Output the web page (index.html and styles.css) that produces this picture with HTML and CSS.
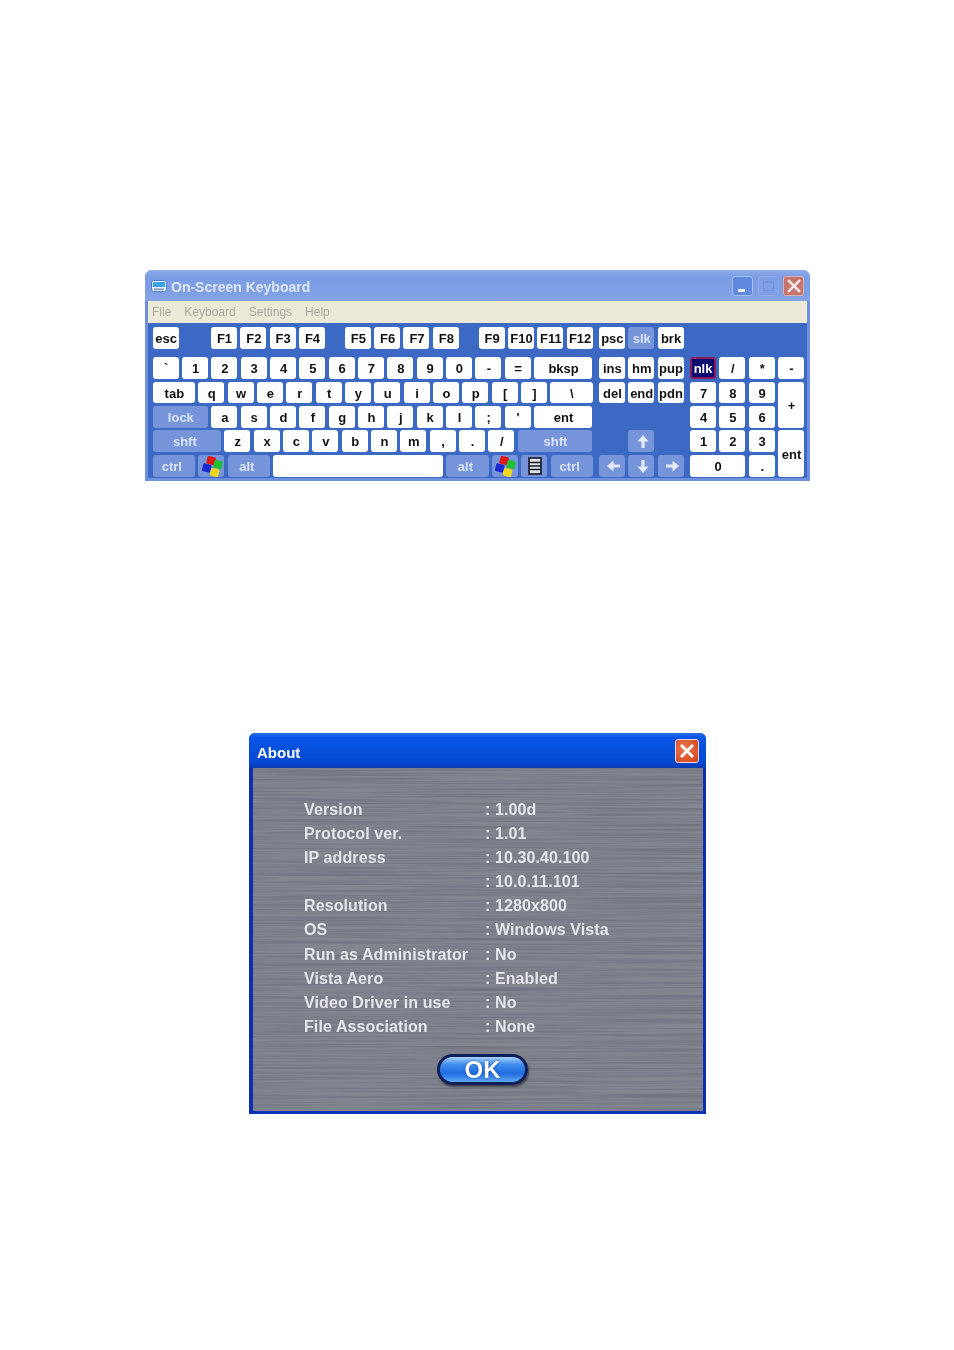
FILE: index.html
```html
<!DOCTYPE html>
<html lang="en">
<head>
<meta charset="utf-8">
<title>On-Screen Keyboard and About dialog</title>
<link rel="stylesheet" href="styles.css">
</head>
<body>
<svg class="defs" width="0" height="0" aria-hidden="true">
  <defs>
    <g id="flag">
      <rect x="7" y="0.5" width="8.5" height="8" rx="1.5" fill="#e01818" transform="rotate(14 11 4)"/>
      <rect x="14" y="4.5" width="8.5" height="8" rx="1.5" fill="#22c030" transform="rotate(14 18 8)"/>
      <rect x="2.5" y="8" width="8.5" height="8" rx="1.5" fill="#1a2ad0" transform="rotate(14 7 12)"/>
      <rect x="10.5" y="12.5" width="8.5" height="8" rx="1.5" fill="#f2d81c" transform="rotate(14 15 16)"/>
    </g>
    <filter id="brushed" x="0" y="0" width="100%" height="100%">
      <feTurbulence type="fractalNoise" baseFrequency="0.006 0.6" numOctaves="3" seed="7"/>
      <feColorMatrix type="matrix" values="0 0 0 0 0.1  0 0 0 0 0.1  0 0 0 0 0.15  0.9 0 0 0 -0.32"/>
    </filter>
  </defs>
</svg>

<section class="osk">
  <header class="osk-title">
    <svg class="osk-icon" width="16" height="12" viewBox="0 0 16 12"><rect x="0.5" y="0.5" width="15" height="11" rx="2" fill="#e8f0fa" stroke="#4a78d0"/><rect x="2" y="2" width="12" height="5" fill="#38a4e8"/><rect x="3" y="8.5" width="10" height="1.5" fill="#7a90c0"/></svg>
    <span class="osk-name">On-Screen Keyboard</span>
    <span class="win-btns">
      <span class="wbtn wbtn-min"><i class="min-bar"></i></span>
      <span class="wbtn wbtn-max"><i class="max-box"></i></span>
      <span class="wbtn wbtn-close"><svg width="16" height="16" viewBox="0 0 16 16"><path d="M3 3l10 10M13 3L3 13" stroke="#f4e8e4" stroke-width="2.6" stroke-linecap="square"/></svg></span>
    </span>
  </header>
  <nav class="osk-menu"><span>File</span><span>Keyboard</span><span>Settings</span><span>Help</span></nav>
  <div class="kb">
    <div class="sect sect-main">
      <div class="row">
        <span class="key">esc</span>
        <span class="key gap-f1">F1</span><span class="key">F2</span><span class="key">F3</span><span class="key">F4</span>
        <span class="key gap-f">F5</span><span class="key">F6</span><span class="key">F7</span><span class="key">F8</span>
        <span class="key gap-f">F9</span><span class="key">F10</span><span class="key">F11</span><span class="key">F12</span>
      </div>
      <div class="row">
        <span class="key">`</span><span class="key">1</span><span class="key">2</span><span class="key">3</span><span class="key">4</span><span class="key">5</span><span class="key">6</span><span class="key">7</span><span class="key">8</span><span class="key">9</span><span class="key">0</span><span class="key">-</span><span class="key">=</span><span class="key w58">bksp</span>
      </div>
      <div class="row">
        <span class="key w42">tab</span><span class="key">q</span><span class="key">w</span><span class="key">e</span><span class="key">r</span><span class="key">t</span><span class="key">y</span><span class="key">u</span><span class="key">i</span><span class="key">o</span><span class="key">p</span><span class="key">[</span><span class="key">]</span><span class="key w42">\</span>
      </div>
      <div class="row">
        <span class="key off w55">lock</span><span class="key">a</span><span class="key">s</span><span class="key">d</span><span class="key">f</span><span class="key">g</span><span class="key">h</span><span class="key">j</span><span class="key">k</span><span class="key">l</span><span class="key">;</span><span class="key">'</span><span class="key w58">ent</span>
      </div>
      <div class="row">
        <span class="key off w68 shift-l">shft</span><span class="key">z</span><span class="key">x</span><span class="key">c</span><span class="key">v</span><span class="key">b</span><span class="key">n</span><span class="key">m</span><span class="key">,</span><span class="key">.</span><span class="key">/</span><span class="key off w75">shft</span>
      </div>
      <div class="row">
        <span class="key off w42 shift-l">ctrl</span>
        <span class="key off"><svg width="24" height="21" viewBox="0 0 24 21"><use href="#flag"/></svg></span>
        <span class="key off w42 shift-l">alt</span>
        <span class="key w170"></span>
        <span class="key off w42 shift-l">alt</span>
        <span class="key off"><svg width="24" height="21" viewBox="0 0 24 21"><use href="#flag"/></svg></span>
        <span class="key off"><svg width="14" height="18" viewBox="0 0 14 18"><rect x="1" y="1" width="12" height="16" fill="#dfe4ee" stroke="#14181f" stroke-width="1.6"/><path d="M1 5.5h12M1 9h12M1 12.5h12" stroke="#14181f" stroke-width="1.4"/></svg></span>
        <span class="key off w42 shift-l">ctrl</span>
      </div>
    </div>

    <div class="sect sect-nav">
      <span class="key r1">psc</span><span class="key off r1">slk</span><span class="key r1">brk</span>
      <span class="key r2">ins</span><span class="key r2">hm</span><span class="key r2">pup</span>
      <span class="key r3">del</span><span class="key r3">end</span><span class="key r3">pdn</span>
      <span class="key off arrow r5 c2"><svg width="14" height="15" viewBox="0 0 14 15"><path d="M7 1l5.5 6.5H8.6V14H5.4V7.5H1.5z" fill="#e4eafa"/></svg></span>
      <span class="key off arrow r6"><svg width="15" height="14" viewBox="0 0 15 14"><path d="M1 7l6.5-5.5v4H14v3H7.5v4z" fill="#e4eafa"/></svg></span>
      <span class="key off arrow r6"><svg width="14" height="15" viewBox="0 0 14 15"><path d="M7 14l5.5-6.5H8.6V1H5.4v6.5H1.5z" fill="#e4eafa"/></svg></span>
      <span class="key off arrow r6"><svg width="15" height="14" viewBox="0 0 15 14"><path d="M14 7L7.500 1.500v4H1v3h6.500v4z" fill="#e4eafa"/></svg></span>
    </div>

    <div class="sect sect-num">
      <span class="key nlk r2">nlk</span><span class="key r2">/</span><span class="key r2">*</span><span class="key r2">-</span>
      <span class="key num-plus">+</span>
      <span class="key num-ent">ent</span>
      <span class="key r3">7</span><span class="key r3">8</span><span class="key r3">9</span>
      <span class="key r4">4</span><span class="key r4">5</span><span class="key r4">6</span>
      <span class="key r5">1</span><span class="key r5">2</span><span class="key r5">3</span>
      <span class="key r6 num-zero">0</span><span class="key r6">.</span>
    </div>
  </div>
</section>

<section class="about">
  <header class="about-title">
    <span class="about-name">About</span>
    <span class="about-close"><svg width="18" height="18" viewBox="0 0 18 18"><path d="M4 4l10 10M14 4L4 14" stroke="#fff" stroke-width="2.8" stroke-linecap="square"/></svg></span>
  </header>
  <div class="about-body">
    <svg class="brush" aria-hidden="true"><rect width="100%" height="100%" filter="url(#brushed)"/></svg>
    <dl class="info">
      <dt>Version</dt><dd>: 1.00d</dd>
      <dt>Protocol ver.</dt><dd>: 1.01</dd>
      <dt>IP address</dt><dd>: 10.30.40.100</dd>
      <dt></dt><dd>: 10.0.11.101</dd>
      <dt>Resolution</dt><dd>: 1280x800</dd>
      <dt>OS</dt><dd>: Windows Vista</dd>
      <dt>Run as Administrator</dt><dd>: No</dd>
      <dt>Vista Aero</dt><dd>: Enabled</dd>
      <dt>Video Driver in use</dt><dd>: No</dd>
      <dt>File Association</dt><dd>: None</dd>
    </dl>
    <span class="ok">OK</span>
  </div>
</section>
</body>
</html>
```

FILE: styles.css
```css
* { box-sizing: border-box; }
html, body { margin: 0; padding: 0; background: #fff; }
body { width: 954px; height: 1350px; overflow: hidden; padding-top: 270px; font-family: "Liberation Sans", Arial, sans-serif; }
.defs { position: absolute; }

.osk {
  width: 665px; height: 211px; margin-left: 145px;
  background: #3b69c4; border-radius: 7px 7px 0 0;
  border: solid #6f90dc; border-width: 0 3px 3px 3px;
  filter: blur(0.35px);
}
.osk-title {
  height: 31px; margin: 0 -3px;
  display: flex; align-items: center; padding: 1px 6px 0;
  background: linear-gradient(#8dabe9 0, #7b9de3 25%, #7e9fe4 70%, #86a4e6 100%);
  border-radius: 7px 7px 0 0;
}
.osk-icon { flex: none; }
.osk-name { margin-left: 4px; padding-top: 2px; color: #dfe6f4; font-size: 14px; font-weight: 700; }
.win-btns { margin-left: auto; display: flex; gap: 4.5px; }
.wbtn { width: 21px; height: 20px; border-radius: 3px; display: flex; align-items: center; justify-content: center; position: relative; }
.wbtn-min { background: #5f8ae0; border: 1px solid #a6bdec; }
.min-bar { position: absolute; left: 5px; bottom: 3px; width: 7px; height: 3px; background: #eef2fb; }
.wbtn-max { background: #7f9fe6; border: 1px solid #8fabe8; }
.max-box { width: 11px; height: 10px; border: 1px solid #7592dc; border-top-width: 2px; }
.wbtn-close { background: #c8746c; border: 1px solid #d8b0b4; }

.osk-menu {
  height: 22px; background: #ece9d8; display: flex; align-items: center; gap: 13px; padding: 0 4px 1px 4px;
  color: #a9a89f; font-size: 12px;
}
.kb { display: flex; gap: 6.5px; padding: 4px 0 0 4.7px; }
.sect { display: grid; grid-template-rows: 27.7px repeat(5, 21.8px); row-gap: 2.6px; align-content: start; }
.sect-main { width: 439.7px; grid-template-columns: 1fr; }
.sect-nav { width: 84.67px; grid-template-columns: repeat(3, 26px); column-gap: 3.33px; }
.sect-num { width: 114px; grid-template-columns: repeat(4, 26px); column-gap: 3.33px; }

.row { display: flex; gap: 3.33px; height: 21.8px; }
.key {
  flex: none; width: 26px; height: 21.8px; background: #fff; border-radius: 3px;
  display: flex; align-items: center; justify-content: center; padding: 1px 0 0 1px;
  color: #111; font-size: 13px; font-weight: 700; white-space: nowrap;
}
.sect-nav > .key, .sect-num > .key { width: auto; }
.off { background: #7694d9; color: #dbe3f6; }
.shift-l { padding: 1px 4px 0 0; }
.arrow { padding: 1px 0 0 3px; }
.w42 { width: 42.3px; }
.w55 { width: 55.3px; }
.w58 { width: 58.3px; }
.w68 { width: 68.3px; }
.w75 { width: 74.6px; }
.w170 { width: 169.7px; }
.gap-f1 { margin-left: 29px; }
.gap-f { margin-left: 16.5px; }

.r1 { grid-row: 1; }
.r2 { grid-row: 2; }
.r3 { grid-row: 3; }
.r4 { grid-row: 4; }
.r5 { grid-row: 5; }
.r6 { grid-row: 6; }
.c2 { grid-column: 2; }
.nlk { background: #0b0b70; color: #fff; border: 2px solid #8c1c58; padding: 0; }
.num-plus { grid-column: 4; grid-row: 3 / span 2; height: auto; }
.num-ent { grid-column: 4; grid-row: 5 / span 2; height: auto; }
.num-zero { grid-column: 1 / span 2; }

.about {
  width: 457px; height: 381px; margin: 252px 0 0 249px;
  background: #0c30b4; border-radius: 6px 6px 0 0;
  display: flex; flex-direction: column;
  filter: blur(0.35px);
}
.about-title {
  height: 35px; flex: none; display: flex; align-items: center; justify-content: space-between;
  padding: 0 7px 0 8px; border-radius: 6px 6px 0 0;
  background: linear-gradient(#2a72f0 0, #0a55e6 12%, #0450dc 50%, #0446d0 85%, #0a3cb0 100%);
}
.about-name { color: #fff; font-size: 15px; font-weight: 700; padding-top: 3px; }
.about-close {
  width: 24px; height: 24px; border-radius: 3px; border: 1px solid #e8d8d8;
  background: radial-gradient(circle at 40% 40%, #ea7a50, #d2401e);
  display: flex; align-items: center; justify-content: center;
}
.about-body {
  position: relative; flex: 1; margin: 0 3px 3px 4px; background: #82868f;
  padding-top: 29.6px;
}
.brush { position: absolute; inset: 0; width: 100%; height: 100%; }
.info {
  position: relative; margin: 0; padding-left: 51px;
  display: grid; grid-template-columns: 181px 1fr; grid-auto-rows: 24.15px; align-items: center;
  color: #e4e6ea; font-size: 16px; font-weight: 700; letter-spacing: .1px;
}
.info dt, .info dd { margin: 0; white-space: nowrap; }
.ok {
  position: absolute; left: 184px; top: 286px; width: 91px; height: 31px;
  border-radius: 16px; border: 3px solid #0e1f58;
  background: linear-gradient(#a8d0fa 0, #3f8eee 30%, #1f6be0 65%, #5ea8f6 100%);
  box-shadow: 1px 2px 2px rgba(30,30,40,.6);
  display: flex; align-items: center; justify-content: center;
  color: #fff; font-size: 24px; font-weight: 700;
  text-shadow: 0 0 2px #123a90;
}
```
